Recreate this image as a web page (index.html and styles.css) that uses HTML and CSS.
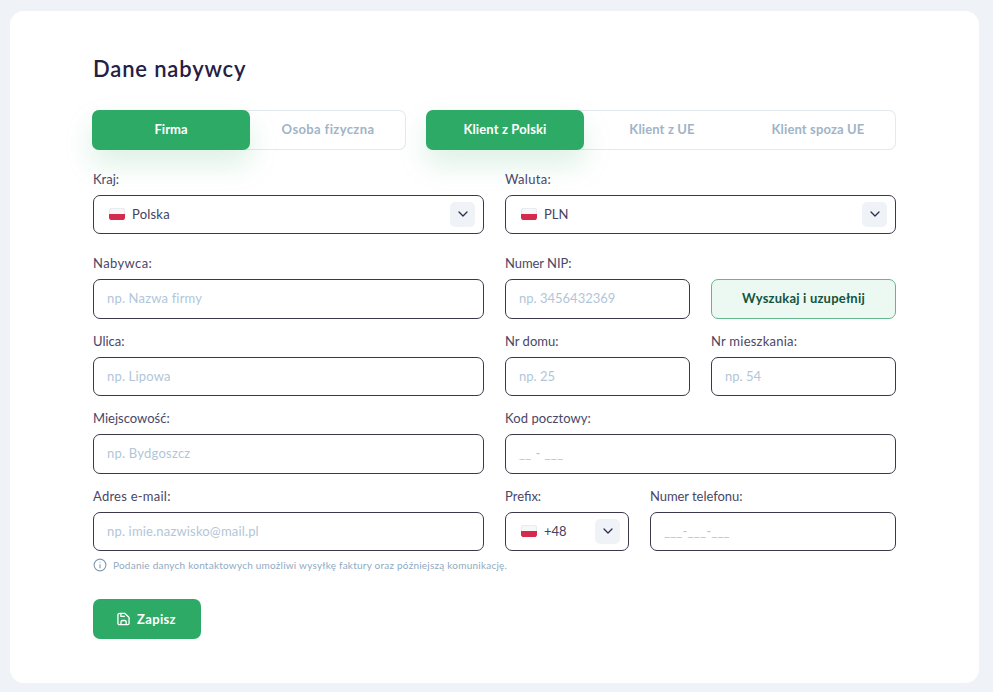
FILE: index.html
```html
<!DOCTYPE html>
<html lang="pl">
<head>
<meta charset="utf-8">
<title>Dane nabywcy</title>
<link rel="stylesheet" href="styles.css">
</head>
<body>
<svg class="defs" width="0" height="0">
  <symbol id="chevron" viewBox="0 0 10 6"><path d="M1 1l4 4 4-4" fill="none" stroke="currentColor" stroke-width="1.3" stroke-linecap="round" stroke-linejoin="round"/></symbol>
  <symbol id="flag" viewBox="0 0 16 12"><rect x=".25" y=".25" width="15.5" height="11.5" rx="2.5" fill="#f7f7f9" stroke="#cfd2da" stroke-width=".5"/><path d="M0 6h16v3.200a2.800 2.800 0 0 1-2.800 2.800H2.800A2.800 2.800 0 0 1 0 9.200z" fill="#d42a4c"/></symbol>
</svg>
<main class="card">
  <h1>Dane nabywcy</h1>
  <div class="tabs">
    <div class="group two"><button class="tab active"><span>Firma</span></button><button class="tab"><span class="t-osoba">Osoba fizyczna</span></button></div>
    <div class="group three"><button class="tab active"><span class="t-client">Klient z Polski</span></button><button class="tab"><span class="t-client">Klient z UE</span></button><button class="tab"><span class="t-client">Klient spoza UE</span></button></div>
  </div>
  <form class="form">
    <div class="row first">
      <div class="field"><label>Kraj:</label><div class="box select"><svg class="flag"><use href="#flag"/></svg><span class="value t-polska">Polska</span><i class="arrow"><svg><use href="#chevron"/></svg></i></div></div>
      <div class="field"><label class="t-waluta">Waluta:</label><div class="box select"><svg class="flag"><use href="#flag"/></svg><span class="value">PLN</span><i class="arrow"><svg><use href="#chevron"/></svg></i></div></div>
    </div>
    <div class="row">
      <div class="field"><label class="t-nabywca">Nabywca:</label><div class="box"><span class="hint">np. Nazwa firmy</span></div></div>
      <div class="pair">
        <div class="field"><label class="t-narrow">Numer NIP:</label><div class="box"><span class="hint t-num">np. 3456432369</span></div></div>
        <button class="search" type="button"><span>Wyszukaj i uzupełnij</span></button>
      </div>
    </div>
    <div class="row">
      <div class="field"><label>Ulica:</label><div class="box"><span class="hint">np. Lipowa</span></div></div>
      <div class="pair">
        <div class="field"><label>Nr domu:</label><div class="box"><span class="hint t-num">np. 25</span></div></div>
        <div class="field"><label class="t-wide">Nr mieszkania:</label><div class="box"><span class="hint t-num">np. 54</span></div></div>
      </div>
    </div>
    <div class="row">
      <div class="field"><label>Miejscowość:</label><div class="box raised"><span class="hint t-bydg">np. Bydgoszcz</span></div></div>
      <div class="field"><label class="t-kod">Kod pocztowy:</label><div class="box raised"><span class="hint t-zip">__ - ___</span></div></div>
    </div>
    <div class="row">
      <div class="field"><label class="t-wide">Adres e-mail:</label><div class="box"><span class="hint">np. imie.nazwisko@mail.pl</span></div></div>
      <div class="phone">
        <div class="field"><label>Prefix:</label><div class="box select"><svg class="flag"><use href="#flag"/></svg><span class="value">+48</span><i class="arrow"><svg><use href="#chevron"/></svg></i></div></div>
        <div class="field"><label class="t-narrow">Numer telefonu:</label><div class="box"><span class="hint t-mask">___-___-___</span></div></div>
      </div>
    </div>
    <p class="note"><svg viewBox="0 0 14 14"><circle cx="7" cy="7" r="5.900"/><path d="M7 6.300v3.900M7 3.700v.9"/></svg><span>Podanie danych kontaktowych umożliwi wysyłkę faktury oraz późniejszą komunikację.</span></p>
    <button class="save" type="button"><svg viewBox="0 0 14 14"><path d="M3 1h5.500L13 5.300V11.500Q13 13 11.500 13H2.500Q1 13 1 11.500V2.500Q1 1 3 1zM4.200 1v3.200h4.300M4.300 13v-2.800q0-1.600 1.600-1.600h2.400q1.600 0 1.600 1.600V13"/></svg><span>Zapisz</span></button>
  </form>
</main>
</body>
</html>
```
FILE: styles.css
```css
* { box-sizing: border-box; }
body { margin: 0; padding: 11px 14px 9px 10px; height: 692px; overflow: hidden; background: #eff3f8; font-family: Lato, "Open Sans", sans-serif; font-size: 13px; color: #242044; }
.defs { display: block; }
span { white-space: nowrap; }
button { font: inherit; font-weight: 700; padding: 0; border: 0; background: none; }
.card { height: 672px; padding: 42px 83px 0; background: #fff; border-radius: 14px; }
h1 { margin: 0; height: 32px; line-height: 32px; font-size: 22px; font-weight: 600; letter-spacing: .83px; }
.tabs { display: flex; gap: 20px; width: 804px; margin: 25px 0 0 -1px; }
.group { display: flex; height: 40px; border-radius: 7px; box-shadow: inset 0 0 0 1px #e4e9ee; }
.two { width: 314px; }
.three { width: 470px; }
.tab { flex: 1; padding-bottom: 2px; color: #9fb4c7; border-radius: 7px; }
.active { flex: 0 0 158px; color: #fff; background: #2dab66; box-shadow: 0 14px 28px rgba(45, 171, 102, .17); }
.form { width: 803px; }
.row { display: grid; grid-template-columns: 391px 391px; gap: 21px; margin-bottom: 13px; }
.first { margin: 19.500px 0 20px; }
.pair { display: grid; grid-template-columns: 185px 185px; gap: 21px; align-items: end; }
.phone { display: grid; grid-template-columns: 124px 246px; gap: 21px; }
label { display: block; height: 20px; margin-bottom: 5px; line-height: 18px; color: #4a4666; }
.box { display: flex; align-items: center; height: 39.500px; padding: 0 8px 1px 13px; border: 1px solid #3b384b; border-radius: 7px; background: #fff; }
.raised { padding-bottom: 2px; }
.hint { color: #b2c6d9; letter-spacing: .17px; }
.select { padding: 0 8px 0 15px; }
.flag { flex: none; width: 16px; height: 12px; margin-right: 7px; }
.value { color: #454160; }
.arrow { display: grid; place-items: center; width: 25px; height: 25px; margin-left: auto; border-radius: 5px; background: #eff3f8; color: #302c4d; }
.arrow svg { width: 10px; height: 6px; }
.search { height: 40px; padding-bottom: 2px; border: 1px solid #65b68c; border-radius: 7px; background: #ebf9f2; color: #15533c; letter-spacing: .2px; }
.note { display: flex; align-items: center; height: 14px; margin: -6px 0 0; font-size: 10px; color: #91aabf; letter-spacing: .23px; }
.note span { padding-bottom: 1px; }
.note svg { width: 14px; height: 14px; margin: 0 6px 0 0; fill: none; stroke: #8199ad; stroke-width: 1.100; }
.save { display: flex; align-items: center; width: 108px; height: 40px; margin-top: 27px; padding: 0 0 1px 24px; border-radius: 7px; background: #2dab66; color: #fff; letter-spacing: .35px; }
.save svg { width: 13px; height: 14px; margin-right: 7px; fill: none; stroke: #fff; stroke-width: 1.400; stroke-linejoin: round; }
.t-osoba { letter-spacing: .38px; }
.t-client { letter-spacing: .13px; }
.t-polska { letter-spacing: .2px; }
.t-waluta { letter-spacing: .3px; }
.t-nabywca { letter-spacing: .4px; }
.t-narrow { letter-spacing: -.06px; }
.t-wide { letter-spacing: .24px; }
.t-kod { letter-spacing: .08px; }
.t-num { letter-spacing: 0; }
.t-bydg { letter-spacing: .23px; }
.t-zip { letter-spacing: .4px; }
.t-mask { letter-spacing: .22px; }
```
